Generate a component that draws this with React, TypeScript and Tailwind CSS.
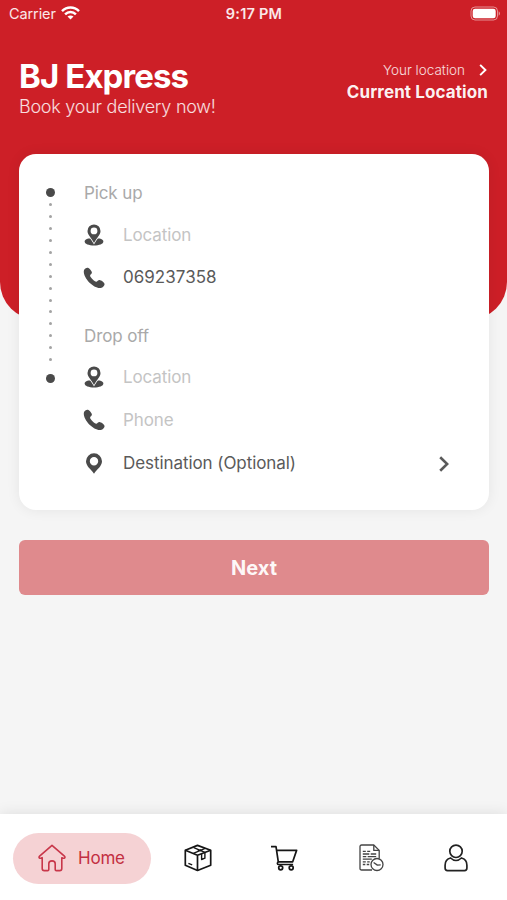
import type {ReactNode} from "react";

function WifiIcon() {
    return (
        <svg width="19" height="14" viewBox="0 0 19 14" fill="none" stroke="#fff" strokeWidth="2.5">
            <path d="M1 5.2C5.9.4 13.1.4 18 5.2"/>
            <path d="M4.1 8.3c3.1-3 7.7-3 10.8 0"/>
            <path d="M9.5 13.6 6.5 10.6c1.8-1.6 4.2-1.6 6 0Z" fill="#fff" stroke="none"/>
        </svg>
    );
}

function BatteryIcon() {
    return (
        <svg width="31" height="15" viewBox="0 0 31 15" fill="none">
            <rect x="1" y="1" width="26.5" height="13" rx="4" stroke="#fff" strokeOpacity=".5"/>
            <rect x="2.7" y="2.7" width="23" height="9.6" rx="2.4" fill="#fff"/>
            <path d="M28.7 5.3c1.7.7 1.7 3.7 0 4.4Z" fill="#fff" fillOpacity=".55"/>
        </svg>
    );
}

function ChevronIcon({className}: {className: string}) {
    return (
        <svg className={className} viewBox="0 0 10 16" fill="none" stroke="currentColor" strokeWidth="2.6">
            <path d="m1.2 1.2 7 6.8-7 6.8"/>
        </svg>
    );
}

// Pin standing on a rounded base, the white stroke separates the two
function LocationIcon() {
    return (
        <svg width="20" height="22" viewBox="0 0 20 22" fill="#4a4a4a">
            <path d="M4.4 14.4C2 15 .6 16.100.6 17.500c0 2.400 4.200 4 9.400 4s9.400-1.600 9.400-4c0-1.400-1.400-2.500-3.800-3.100Z"/>
            <path fillRule="evenodd" stroke="#fff" strokeWidth="1.6" paintOrder="stroke" d="M10 .4a6.500 6.500 0 0 0-6.500 6.500c0 3.800 3.500 6.500 6.500 12 3-5.500 6.500-8.200 6.500-12A6.500 6.500 0 0 0 10 .4Zm0 3.100a3.400 3.400 0 1 1 0 6.800 3.400 3.400 0 0 1 0-6.800Z"/>
        </svg>
    );
}

function PhoneIcon() {
    return (
        <svg width="22" height="22" viewBox="0 0 22 22" fill="#4a4a4a">
            <path d="M1 3.2C1.5 1.7 3.6.4 4.9.8c1.500.4 3.900 3.300 4 4.700.1 1.500-1.800 2.100-1.800 3.200 0 1.500 4.500 6 6.100 6 1.200 0 1.900-1.800 3.400-1.700 1.400.1 4.500 2.300 4.900 3.800.4 1.400-1.300 3.500-2.900 4C11.600 23.100-1 10.400 1 3.200Z"/>
        </svg>
    );
}

function PinIcon() {
    return (
        <svg width="18" height="21" viewBox="0 0 18 21" fill="#4a4a4a">
            <path fillRule="evenodd" d="M9 .3A8 8 0 0 0 1 8.3C1 13 6 16.500 9 20.700c3-4.200 8-7.700 8-12.400a8 8 0 0 0-8-8Zm0 3.700a4.200 4.200 0 1 1 0 8.400A4.200 4.200 0 0 1 9 4Z"/>
        </svg>
    );
}

function HomeIcon() {
    return (
        <svg width="28" height="28" viewBox="0 0 28 28" fill="none" stroke="#c8374a" strokeWidth="1.6" strokeLinejoin="round">
            <path d="M14 1.3 1.600 12.200c-1.400 1.300 0 2.500 1.700 1.900l.9-.4v10.700c0 1.500.7 2.200 2.100 2.200h3.300c.8 0 1.200-.4 1.200-1.200v-5.700c0-1.800 1.100-2.800 3.200-2.800s3.200 1 3.200 2.800v5.700c0 .8.4 1.200 1.200 1.200h3.300c1.400 0 2.100-.7 2.100-2.200V13.700l.9.4c1.700.6 3.100-.6 1.700-1.900L14 1.300Z"/>
        </svg>
    );
}

function PackageIcon() {
    return (
        <svg width="28" height="28" viewBox="0 0 28 28" fill="none" stroke="#161616" strokeWidth="1.7" strokeLinejoin="round">
            <path d="M13.500 1.400 1.300 6.300v14.900l12.200 5.300 13.200-5.300V6.300L13.500 1.400Z"/>
            <path d="m1.300 6.300 12.200 4.900 13.200-4.900M13.500 11.200v15.300"/>
            <path d="m9.400 9.400 11.700-5M17.600 10v5.500l3.300-1.300V8.300L9.800 3.600M13.700 6.800l3.300-1.200" strokeWidth="1.400"/>
            <path d="m4.400 19.400 3.800 1.500" strokeWidth="1.300"/>
        </svg>
    );
}

function CartIcon() {
    return (
        <svg width="28" height="26" viewBox="1 0 28 26" fill="none" stroke="#161616" strokeWidth="1.7" strokeLinejoin="round">
            <path d="M.7 1.700H6l2.300 15.100h14.400l3.900-11.400H6.600"/>
            <path d="M8.300 16.800c-1.500 1.200-1 2.700.3 2.700h14.500"/>
            <circle cx="10.700" cy="22.800" r="2"/>
            <circle cx="21.200" cy="22.800" r="2"/>
        </svg>
    );
}

function OrdersIcon() {
    return (
        <svg width="26" height="28" viewBox="0 0 26 28" fill="none" stroke="#444" strokeWidth="1.3" strokeLinejoin="round">
            <path d="M13 26H2.600C1.600 26 1 25.400 1 24.400V2.600C1 1.600 1.600 1 2.600 1h12.200l5.400 5.400v8"/>
            <path d="M14.800 1v5.400h5.400"/>
            <path d="M3.800 7.300h3M8.200 7.300h3M3.800 10h6.500M11.700 10h5.500M3.800 12.600h3.500M8.700 12.600h8.500M3.800 15.200h9M3.800 17.800h3M8.200 17.800h2.500M3.800 20.500h2.500M7.700 20.500h2.500"/>
            <circle cx="18" cy="20.500" r="6"/>
            <path d="m14.600 18.500 3.800 2.600 3.300-.2"/>
        </svg>
    );
}

function ProfileIcon() {
    return (
        <svg width="24" height="28" viewBox="0 0 24 28" fill="none" stroke="#222" strokeWidth="1.7">
            <circle cx="12" cy="7.300" r="6.200"/>
            <path d="M6.600 14c3.300 3.300 7.500 3.300 10.800 0 3.600.8 5.500 3.600 5.500 7.200v2.900c0 1.600-.8 2.500-2.400 2.500h-17c-1.600 0-2.400-.9-2.400-2.500v-2.900c0-3.600 1.900-6.400 5.500-7.200Z"/>
        </svg>
    );
}

function StatusBar() {
    return (
        <div className="grid h-[26px] grid-cols-3 items-center pr-[6px] pl-[9px] text-[14.5px] text-white/90">
            <div className="flex items-center gap-[5px]">
                <span className="pt-px tracking-[-0.1px]">Carrier</span>
                <WifiIcon/>
            </div>
            <span className="-ml-[2px] pt-px text-center font-semibold tracking-[0.25px]">9:17 PM</span>
            <div className="flex justify-end">
                <BatteryIcon/>
            </div>
        </div>
    );
}

function Header() {
    return (
        <header className="h-[320px] rounded-b-[38px] bg-[#cd1f27]">
            <StatusBar/>
            <div className="flex justify-between px-[19px] pt-[31px]">
                <div>
                    <h1 className="text-[33px] leading-[38px] font-bold tracking-[-0.9px] text-white">BJ Express</h1>
                    <p className="pt-px text-[18px] leading-[22px] font-light tracking-[-0.25px] text-white/85">Book your delivery now!</p>
                </div>
                <div className="flex flex-col items-end pt-[3px]">
                    <div className="flex items-center gap-[14px] pr-px text-white">
                        <span className="text-[13.5px] leading-5 font-light text-white/85">Your location</span>
                        <ChevronIcon className="h-3 w-2"/>
                    </div>
                    <p className="text-[17px] leading-6 font-bold tracking-[0.1px] text-white/95">Current Location</p>
                </div>
            </div>
        </header>
    );
}

function Rail() {
    return (
        <div className="flex w-[10px] flex-col items-center pt-[34px]">
            <span className="size-[9px] rounded-full bg-[#4a4a4a]"/>
            <div className="flex flex-col gap-[8.94px] pt-[6px] pb-[13px]">
                {Array.from({length: 14}, (_, i) => (
                    <span key={i} className="size-[3px] rounded-full bg-[#a3a3a3]"/>
                ))}
            </div>
            <span className="size-[9px] rounded-full bg-[#4a4a4a]"/>
        </div>
    );
}

function Row({icon, children}: {icon: ReactNode; children: ReactNode}) {
    return (
        <div className="flex h-[42.8px] items-center">
            <span className="flex w-[22px] justify-center pb-px">{icon}</span>
            <div className="ml-[18px] flex flex-1 items-center justify-between">{children}</div>
        </div>
    );
}

function DeliveryCard() {
    return (
        <section className="mx-[19px] -mt-[166px] flex h-[356px] w-[470px] rounded-[17px] bg-white pr-10 pl-[26px] text-[17px] tracking-[-0.12px] text-[#5a5a5a] shadow-[0_0_14px_rgba(0,0,0,0.07)]">
            <Rail/>
            <div className="ml-[28px] flex-1 pt-[18px]">
                <h2 className="ml-px h-[42px] leading-[42px] text-[#a9a9a9]">Pick up</h2>
                <Row icon={<LocationIcon/>}>
                    <span className="text-[#c4c4c4]">Location</span>
                </Row>
                <Row icon={<PhoneIcon/>}>
                    <span className="tracking-[0.02px]">069237358</span>
                </Row>
                <h2 className="mt-[15px] ml-px h-[42px] leading-[42px] text-[#a9a9a9]">Drop off</h2>
                <Row icon={<LocationIcon/>}>
                    <span className="text-[#c4c4c4]">Location</span>
                </Row>
                <Row icon={<PhoneIcon/>}>
                    <span className="text-[#c4c4c4]">Phone</span>
                </Row>
                <Row icon={<PinIcon/>}>
                    <span className="tracking-[-0.07px]">Destination (Optional)</span>
                    <ChevronIcon className="h-4 w-[10px]"/>
                </Row>
            </div>
        </section>
    );
}

function TabBar() {
    return (
        <nav className="flex h-[86px] items-center bg-white pl-[13px] shadow-[0_0_14px_rgba(0,0,0,0.1)]">
            <a className="mt-[2px] flex h-[51px] w-[138px] items-center rounded-full bg-[#f5d2d4] pl-[25px] text-[17px] text-[#c32f42]">
                <HomeIcon/>
                <span className="ml-3 pt-[2px] tracking-[-0.2px]">Home</span>
            </a>
            <div className="mt-[2px] ml-[33px] flex w-[284px] items-center justify-between">
                <PackageIcon/>
                <CartIcon/>
                <OrdersIcon/>
                <ProfileIcon/>
            </div>
        </nav>
    );
}

export default function App() {
    return (
        <div className="flex h-[900px] w-[507px] flex-col overflow-hidden bg-[#f5f5f5] font-['Inter','Liberation_Sans',sans-serif]">
            <Header/>
            <DeliveryCard/>
            <button className="mt-[30px] ml-[19px] h-[55px] w-[470px] rounded-md bg-[#df8a8d] text-[20px] font-bold text-white/95">
                Next
            </button>
            <div className="flex-1"/>
            <TabBar/>
        </div>
    );
}
